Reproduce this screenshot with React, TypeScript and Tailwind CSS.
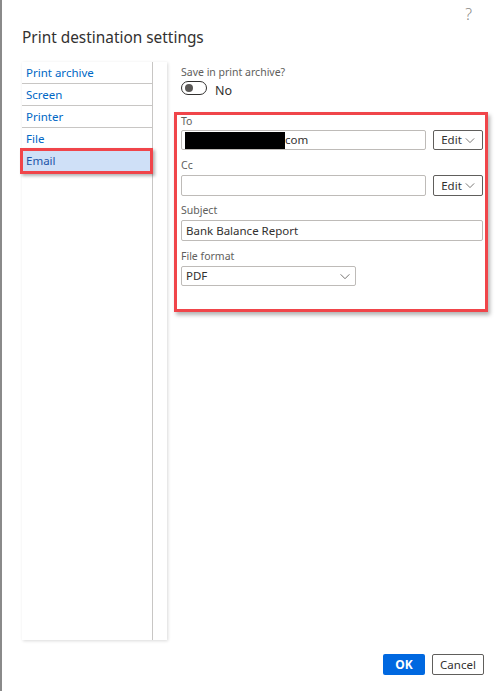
import React from "react";

const Chevron = ({ className = "" }: { className?: string }) => (
  <svg viewBox="0 0 12 8" className={className} fill="none" stroke="currentColor" strokeWidth="1">
    <path d="M1 1.5 L6 6.5 L11 1.5" />
  </svg>
);

export default function App() {
  const items = ["Print archive", "Screen", "Printer", "File", "Email"];
  return (
    <div
      className="w-[496px] h-[691px] bg-white relative overflow-hidden text-[#323130] border-l-2 border-[#8a8a8a]"
      style={{ fontFamily: '"Segoe UI", "Noto Sans", "Open Sans", sans-serif' }}
    >
      <div className="absolute right-[24px] top-[2px] text-[16px] text-[#8a8886] font-light">?</div>
      <div className="flex flex-col h-full">
        <div className="pl-[20px] pt-[27px] h-[62px] text-[15.4px] leading-[22px] text-[#323130]">
          Print destination settings
        </div>
        <div className="flex pl-[20px] h-[578px]">
          {/* Left list */}
          <div className="w-[145px] h-full bg-white shadow-[1px_1px_3px_rgba(0,0,0,0.15)] flex">
            <div className="w-[131px] border-r border-[#c8c6c4] flex flex-col">
              {items.map((it) =>
                it === "Email" ? (
                  <div
                    key={it}
                    className="relative -ml-[2px] -mr-[1px] h-[26px] -mt-[2px] border-[3px] border-[#f0454a] bg-[#cfe0f7] shadow-[2px_2px_3px_rgba(0,0,0,0.3)] text-[11.5px] leading-[20px] pl-[3px] text-[#1d55a8]"
                  >
                    {it}
                  </div>
                ) : (
                  <div
                    key={it}
                    className="h-[22px] border-b border-[#c8c6c4] text-[11.5px] leading-[21px] pl-[4px] text-[#0067c5]"
                  >
                    {it}
                  </div>
                )
              )}
            </div>
          </div>
          {/* Right */}
          <div className="flex-1 pl-[7px] flex flex-col h-full">
            <div className="pl-[7px] pt-[3px] h-[18px] text-[10.5px] leading-[15px] text-[#605e5c]">Save in print archive?</div>
            <div className="pl-[7px] mt-[1px] h-[14px] flex items-center gap-[8px]">
              <div className="w-[26px] h-[14px] rounded-full border border-[#323130] flex items-center pl-[3px]">
                <div className="w-[8px] h-[8px] rounded-full bg-[#5a5856]" />
              </div>
              <span className="text-[12.5px] leading-[16px] text-[#323130] mt-[6px]">No</span>
            </div>
            <div className="mt-[17px] w-[314px] h-[200px] border-[3px] border-[#f0454a] shadow-[2px_3px_4px_rgba(0,0,0,0.3)] pl-[4px] pr-[2px] flex flex-col">
              <div className="h-[12px] text-[10.5px] leading-[12px] text-[#605e5c] mt-[0px]">To</div>
              <div className="flex items-center mt-[3px]">
                <div className="w-[245px] h-[20px] border border-[#bebbb8] rounded-[2px] flex items-center pl-[3px] text-[11.5px] text-[#323130]">
                  <div className="w-[100px] h-[17px] bg-black" />
                  <span className="leading-[18px]">com</span>
                </div>
                <button className="ml-[7px] w-[50px] h-[20px] border border-[#605e5c] rounded-[2px] flex items-center justify-center gap-[3px] text-[11.5px] text-[#323130]">
                  Edit <Chevron className="w-[10px] h-[7px] text-[#605e5c]" />
                </button>
              </div>
              <div className="h-[14px] text-[10.5px] leading-[14px] text-[#605e5c] mt-[8px]">Cc</div>
              <div className="flex items-center mt-[3px]">
                <div className="w-[245px] h-[21px] border border-[#bebbb8] rounded-[2px]" />
                <button className="ml-[7px] w-[50px] h-[21px] border border-[#605e5c] rounded-[2px] flex items-center justify-center gap-[3px] text-[11.5px] text-[#323130]">
                  Edit <Chevron className="w-[10px] h-[7px] text-[#605e5c]" />
                </button>
              </div>
              <div className="h-[14px] text-[10.5px] leading-[14px] text-[#605e5c] mt-[7px]">Subject</div>
              <div className="w-[302px] h-[21px] mt-[3px] border border-[#bebbb8] rounded-[2px] pl-[4px] text-[11.5px] leading-[19px] text-[#323130]">
                Bank Balance Report
              </div>
              <div className="h-[14px] text-[10.5px] leading-[14px] text-[#605e5c] mt-[8px]">File format</div>
              <div className="w-[175px] h-[20px] mt-[3px] border border-[#bebbb8] rounded-[2px] pl-[4px] pr-[4px] flex items-center justify-between text-[11.5px] text-[#323130]">
                <span className="leading-[18px]">PDF</span>
                <Chevron className="w-[12px] h-[7px] text-[#605e5c]" />
              </div>
            </div>
          </div>
        </div>
        <div className="flex justify-end pr-[12px] pt-[14px] gap-[7px]">
          <button className="w-[42px] h-[21px] bg-[#0068e0] rounded-[2px] text-white text-[12px] font-bold">OK</button>
          <button className="w-[52px] h-[21px] border border-[#605e5c] rounded-[2px] text-[11.5px] text-[#323130]">Cancel</button>
        </div>
      </div>
    </div>
  );
}
